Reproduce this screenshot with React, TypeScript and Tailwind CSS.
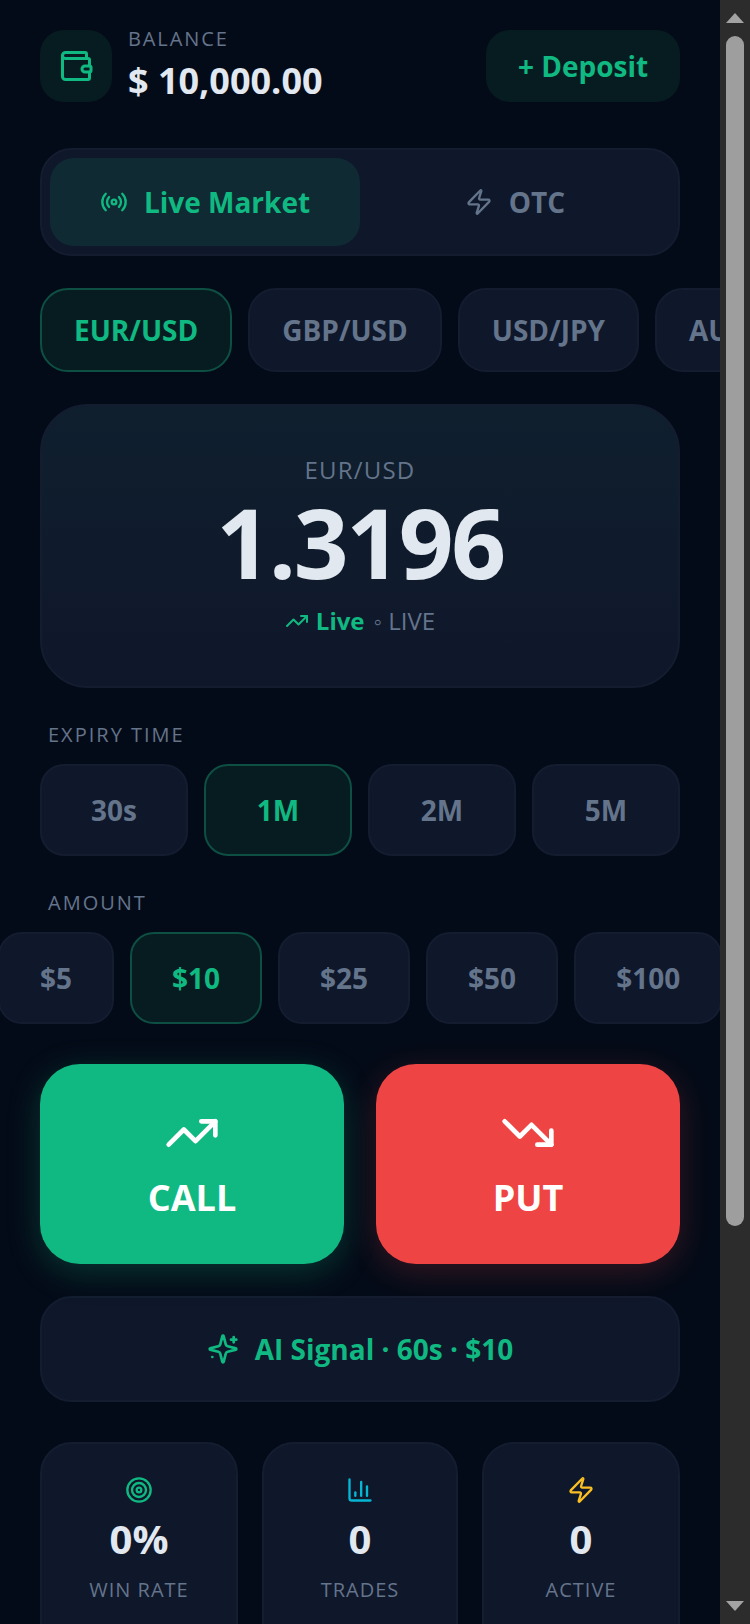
import { BarChart3, Radio, Target, TrendingDown, TrendingUp, Wallet, Zap } from 'lucide-react';

const pairs = ['EUR/USD', 'GBP/USD', 'USD/JPY', 'AUD/USD'];
const expiries = ['30s', '1M', '2M', '5M'];
const amounts = ['$5', '$10', '$25', '$50', '$100'];

const stats = [
  { label: 'WIN RATE', value: '0%', icon: <Target size={28} className="text-[#10b981]" /> },
  { label: 'TRADES', value: '0', icon: <BarChart3 size={28} className="text-[#06b6d4]" /> },
  { label: 'ACTIVE', value: '0', icon: <Zap size={28} className="text-[#fbbf24]" /> },
];

const chipOn = 'bg-[#071c20] border-[#0e4f43] text-[#10b981]';
const chipOff = 'bg-[#0f172a] border-[#141d30] text-[#64748b]';

export default function App() {
  return (
    <div className="flex h-[1624px] w-[750px] overflow-hidden bg-[#040b18] font-['Open_Sans',sans-serif]">
      <div className="w-[720px] shrink-0 overflow-hidden">
        {/* Header */}
        <div className="mx-10 mt-[30px] flex h-[72px] items-center justify-between">
          <div className="flex items-center gap-4">
            <div className="flex h-[72px] w-[72px] items-center justify-center rounded-3xl bg-[#071c20]">
              <Wallet size={36} className="text-[#10b981]" />
            </div>
            <div>
              <p className="text-[20px] leading-[26px] tracking-[1.9px] text-[#64748b]">BALANCE</p>
              <p className="mt-[4px] text-[36px] leading-[50px] font-bold text-[#e2e8f0]">$ 10,000.00</p>
            </div>
          </div>
          <button className="flex h-[72px] w-[194px] items-center justify-center rounded-3xl bg-[#071c20] text-[28px] font-bold text-[#10b981]">
            + Deposit
          </button>
        </div>

        {/* Market tabs */}
        <div className="mx-10 mt-[46px] flex h-[108px] items-center rounded-[32px] border-2 border-[#141d30] bg-[#0f172a] px-2">
          <div className="flex h-[88px] w-[310px] items-center justify-center gap-4 rounded-3xl bg-[#0f2a33] text-[28px] font-bold text-[#10b981]">
            <Radio size={28} />
            Live Market
          </div>
          <div className="flex h-[88px] flex-1 items-center justify-center gap-4 text-[28px] font-bold text-[#64748b]">
            <Zap size={28} />
            OTC
          </div>
        </div>

        {/* Pairs */}
        <div className="mt-8 flex gap-4 pl-10">
          {pairs.map((pair, i) => (
            <div
              key={pair}
              className={`flex h-[84px] shrink-0 items-center rounded-[28px] border-2 px-8 text-[28px] font-bold ${i === 0 ? chipOn : chipOff}`}
            >
              {pair}
            </div>
          ))}
        </div>

        {/* Price card */}
        <div className="mx-10 mt-8 flex h-[284px] flex-col items-center rounded-[48px] border-2 border-[#141d30] bg-gradient-to-b from-[#0f1f2e] to-[#0f172a] pt-[46px]">
          <p className="text-[24px] leading-[36px] tracking-[1.2px] text-[#64748b]">EUR/USD</p>
          <p className="mt-[4px] text-[96px] leading-[100px] font-bold tracking-[-2.4px] text-[#e2e8f0]">1.3196</p>
          <div className="mt-[11px] flex items-center text-[24px] leading-[36px]">
            <TrendingUp size={24} className="mr-[7px] text-[#10b981]" />
            <span className="mr-[9px] font-bold text-[#10b981]">Live</span>
            <span className="text-[#64748b]">◦ LIVE</span>
          </div>
        </div>

        {/* Expiry */}
        <p className="mt-[33px] ml-12 text-[20px] leading-[28px] tracking-[2px] text-[#64748b]">EXPIRY TIME</p>
        <div className="mx-10 mt-[15px] grid grid-cols-4 gap-4">
          {expiries.map((t, i) => (
            <div
              key={t}
              className={`flex h-[92px] items-center justify-center rounded-3xl border-2 text-[28px] font-bold ${i === 1 ? chipOn : chipOff}`}
            >
              {t}
            </div>
          ))}
        </div>

        {/* Amount */}
        <p className="mt-[33px] ml-12 text-[20px] leading-[28px] tracking-[2px] text-[#64748b]">AMOUNT</p>
        <div className="mt-[15px] -ml-[2px] flex gap-4">
          {amounts.map((a, i) => (
            <div
              key={a}
              className={`flex h-[92px] shrink-0 items-center justify-center rounded-3xl border-2 px-10 text-[28px] font-bold ${i === 1 ? chipOn : chipOff}`}
            >
              {a}
            </div>
          ))}
        </div>

        {/* Call / Put */}
        <div className="mx-10 mt-10 grid grid-cols-2 gap-8">
          <button className="flex h-[200px] flex-col items-center justify-center gap-3 rounded-[40px] bg-[#10b981] text-white shadow-[0_8px_32px_rgba(16,185,129,0.25)]">
            <TrendingUp size={56} />
            <span className="text-[36px] leading-[50px] font-bold">CALL</span>
          </button>
          <button className="flex h-[200px] flex-col items-center justify-center gap-3 rounded-[40px] bg-[#ef4444] text-white shadow-[0_8px_32px_rgba(239,68,68,0.2)]">
            <TrendingDown size={56} />
            <span className="text-[36px] leading-[50px] font-bold">PUT</span>
          </button>
        </div>

        {/* AI signal */}
        <div className="mx-10 mt-8 flex h-[106px] items-center justify-center gap-4 rounded-[32px] border-2 border-[#141d30] bg-[#0f172a] text-[28px] font-bold text-[#10b981]">
          <svg width="32" height="32" viewBox="0 0 24 24" fill="none" stroke="currentColor" strokeWidth="2" strokeLinecap="round" strokeLinejoin="round">
            <path d="M9.94 15.5A2 2 0 0 0 8.5 14.06l-6.14-1.58a.5.5 0 0 1 0-.96L8.5 9.94A2 2 0 0 0 9.94 8.5l1.58-6.14a.5.5 0 0 1 .96 0L14.06 8.5A2 2 0 0 0 15.5 9.94l6.14 1.58a.5.5 0 0 1 0 .96L15.5 14.06a2 2 0 0 0-1.44 1.44l-1.58 6.14a.5.5 0 0 1-.96 0z" />
            <path d="M20 3v4" />
            <path d="M22 5h-4" />
            <path d="M4 18h.01" />
          </svg>
          AI Signal · 60s · $10
        </div>

        {/* Stats */}
        <div className="mx-10 mt-10 grid grid-cols-[198px_196px_198px] gap-6">
          {stats.map((s) => (
            <div key={s.label} className="flex h-[220px] flex-col items-center rounded-[32px] border-2 border-[#141d30] bg-[#0f172a] pt-[32px]">
              {s.icon}
              <p className="mt-[7px] text-[40px] leading-[56px] font-bold text-[#e2e8f0]">{s.value}</p>
              <p className="mt-[9px] text-[20px] leading-[28px] tracking-[1px] text-[#64748b]">{s.label}</p>
            </div>
          ))}
        </div>
      </div>

      {/* Scrollbar */}
      <div className="flex w-[30px] shrink-0 flex-col items-center bg-[#2c2c2c]">
        <svg width="18" height="10" viewBox="0 0 18 10" className="mt-[13px] fill-[#a3a3a3]">
          <path d="M9 0 L18 10 L0 10 Z" />
        </svg>
        <div className="mt-[13px] h-[1190px] w-[18px] rounded-[9px] bg-[#9e9e9e]" />
        <svg width="18" height="10" viewBox="0 0 18 10" className="mt-auto mb-[13px] fill-[#a3a3a3]">
          <path d="M0 0 L18 0 L9 10 Z" />
        </svg>
      </div>
    </div>
  );
}
